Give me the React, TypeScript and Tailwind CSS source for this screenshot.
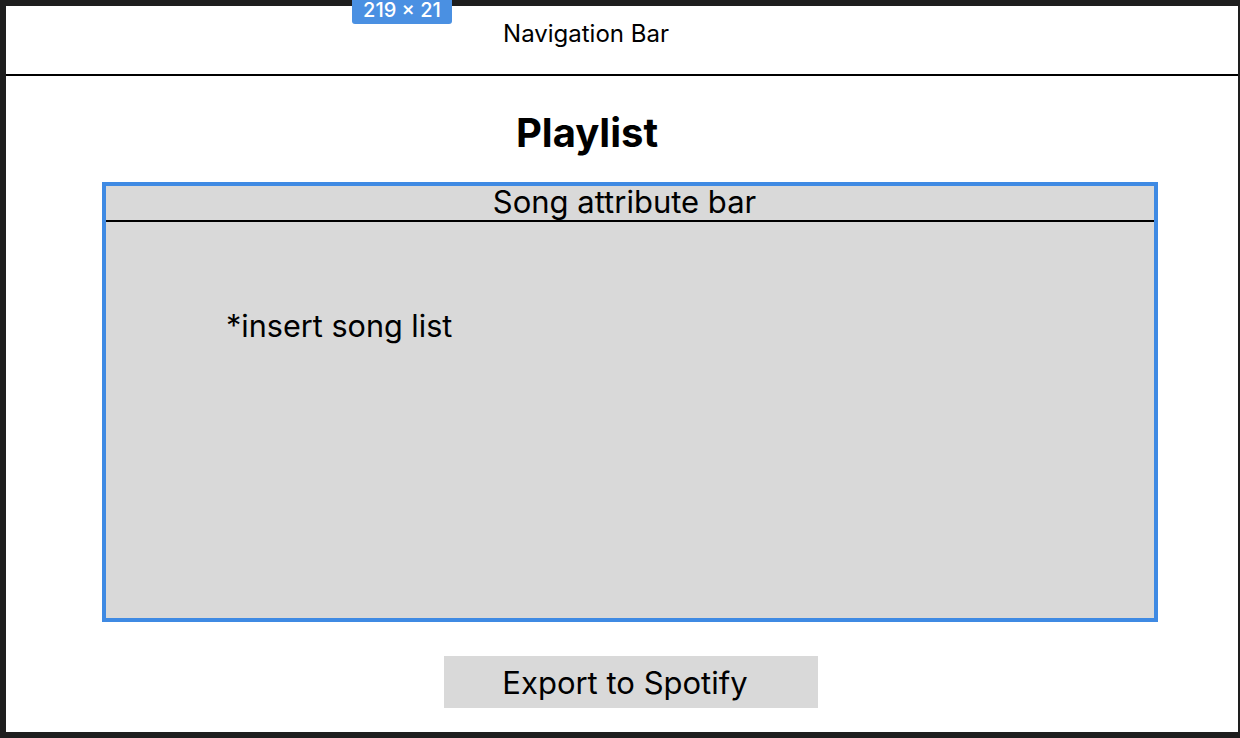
import React from 'react';

const font = { fontFamily: 'Inter, "Noto Sans", sans-serif' };

export default function App() {
  return (
    <div className="relative w-[1240px] h-[738px] bg-[#1e1e1e] pt-[6px] pl-[6px] pr-[2px] pb-[6px]" style={font}>
      {/* selection size badge */}
      <div className="absolute z-10 left-[352px] top-0 h-[24px] w-[100px] rounded-b-[3px] bg-[#4a90e2] text-white text-[20px] font-medium leading-[20px] text-center">
        219 × 21
      </div>

      <div className="h-full bg-white flex flex-col text-black">
        {/* Navigation */}
        <div className="h-[70px] border-b-2 border-black flex items-center justify-center">
          <span className="text-[24px] ml-[-72px] mt-[-12px]">Navigation Bar</span>
        </div>

        {/* Title */}
        <h1 className="mt-[30px] h-[54px] text-center text-[40px] font-bold leading-[54px] mr-[70px]">Playlist</h1>

        {/* Playlist box */}
        <div className="mt-[22px] ml-[96px] w-[1056px] h-[440px] border-4 border-[#3f8ae3] bg-[#d9d9d9] flex flex-col">
          <div className="h-[36px] border-b-2 border-black text-[31px] leading-[32px] text-center pr-[11px]">Song attribute bar</div>
          <div className="pl-[120px] pt-[86px] text-[30.6px] leading-[36px]">*insert song list</div>
        </div>

        {/* Export */}
        <div className="flex mt-[34px] pl-[438px]">
          <button className="w-[374px] h-[52px] bg-[#d9d9d9] text-[31px] leading-[54px] pr-[12px]">Export to Spotify</button>
        </div>
      </div>
    </div>
  );
}
